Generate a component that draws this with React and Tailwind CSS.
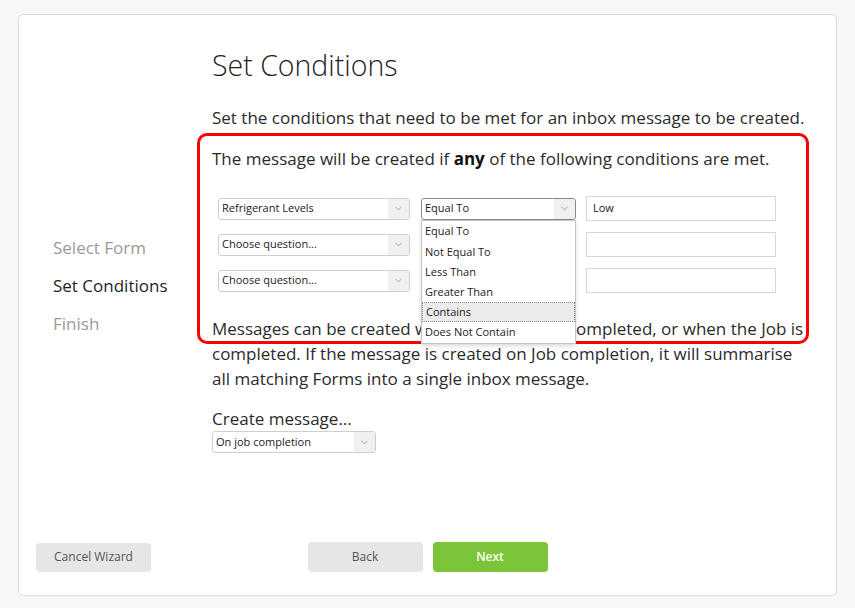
import { ChevronDown } from 'lucide-react'

const navItems = [
  { label: 'Select Form', active: false },
  { label: 'Set Conditions', active: true },
  { label: 'Finish', active: false }
]

const operators = ['Equal To', 'Not Equal To', 'Less Than', 'Greater Than', 'Contains', 'Does Not Contain']

function Select({ value, width, focused, children }) {
  return (
    <div className={`relative ${width}`}>
      <div
        className={`flex h-[22px] items-stretch rounded-[3px] border bg-white text-[11px] text-[#222] ${
          focused ? 'border-[#8a8a8a]' : 'border-[#cfcfcf]'
        }`}
      >
        <span className="flex flex-1 items-center pl-[3px]">{value}</span>
        <span className="flex w-[21px] items-center justify-center rounded-r-[3px] bg-[#f0f0f0]">
          <ChevronDown size={11} strokeWidth={1.5} className="text-[#888]" />
        </span>
      </div>
      {children}
    </div>
  )
}

function Row({ question, operator, value, open }) {
  return (
    <div className="flex h-[25px] items-center pl-[6px]">
      <Select value={question} width="w-[192px]" />
      <div className="ml-[11px]">
        <Select value={operator} width="w-[155px]" focused={open}>
          {open && (
            <div className="absolute left-0 top-[22px] z-10 w-[155px] border border-[#c4c4c4] bg-white pt-px shadow-[0_2px_4px_rgba(0,0,0,0.15)]">
              {operators.map((op) => (
                <div
                  key={op}
                  className={`flex h-[20.2px] items-center px-[3px] text-[11px] text-[#222] ${
                    op === 'Contains' ? 'border border-dotted border-[#888] bg-[#ececec]' : ''
                  }`}
                >
                  {op}
                </div>
              ))}
            </div>
          )}
        </Select>
      </div>
      <div className="ml-[10px] flex h-[25px] w-[190px] items-center border border-[#d6d6d6] bg-white pl-[6px] text-[11px] text-[#222]">
        {value}
      </div>
    </div>
  )
}

export default function App() {
  return (
    <div className="relative h-[608px] w-[855px] bg-[#f7f7f7] pl-[18px] pt-[14px] font-['Open_Sans',sans-serif]">
      <div className="flex h-[582px] w-[819px] flex-col rounded-[5px] border border-[#dcdcdc] bg-white">
        <div className="flex flex-1">
          <nav className="flex w-[193px] flex-col gap-[13px] pl-[34px] pt-[220px]">
            {navItems.map((item) => (
              <div
                key={item.label}
                className={`text-[17px] leading-[25px] ${item.active ? 'text-[#1e1e1e]' : 'text-[#9a9a9a]'}`}
              >
                {item.label}
              </div>
            ))}
          </nav>

          <main className="w-[600px] pt-[32px] text-[#2b2b2b]">
            <h1 className="text-[28.5px] font-light leading-[36px] text-[#1e1e1e]">Set Conditions</h1>
            <p className="mt-[22px] text-[17px] leading-[25px]">
              Set the conditions that need to be met for an inbox message to be created.
            </p>
            <p className="mt-[16px] text-[17px] leading-[25px]">
              The message will be created if <b className="font-bold text-[#111]">any</b> of the following conditions are met.
            </p>

            <div className="mt-[25px] flex flex-col gap-[11px]">
              <Row question="Refrigerant Levels" operator="Equal To" value="Low" open />
              <Row question="Choose question..." operator="" value="" />
              <Row question="Choose question..." operator="" value="" />
            </div>

            <p className="mt-[23px] text-[17px] leading-[25px]">
              Messages can be created when each Form is completed, or when the Job is completed. If the
              message is created on Job completion, it will summarise all matching Forms into a single inbox
              message.
            </p>

            <div className="mt-[15px] text-[17px] leading-[25px]">Create message...</div>
            <Select value="On job completion" width="w-[164px]" />
          </main>
        </div>

        <footer className="grid grid-cols-[1fr_auto_1fr] items-center pb-[23px]">
          <div className="pl-[17px]">
            <button className="h-[29px] w-[115px] rounded-[4px] bg-[#e6e6e6] text-[12px] text-[#555]">
              Cancel Wizard
            </button>
          </div>
          <div className="flex gap-[10px]">
            <button className="h-[30px] w-[115px] rounded-[4px] bg-[#e6e6e6] text-[12px] text-[#555]">Back</button>
            <button className="h-[30px] w-[115px] rounded-[4px] bg-[#7cc43a] text-[12px] font-semibold text-white">
              Next
            </button>
          </div>
          <div />
        </footer>
      </div>

      <div className="pointer-events-none absolute left-[197px] top-[133px] h-[211px] w-[612px] rounded-[10px] border-[3px] border-[#ff0000]" />
    </div>
  )
}
